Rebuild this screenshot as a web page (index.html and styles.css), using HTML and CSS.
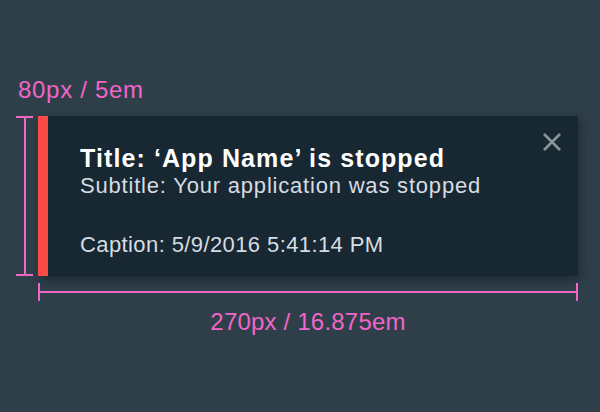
FILE: index.html
```html
<!DOCTYPE html>
<html>
<head>
<meta charset="utf-8">
<link rel="stylesheet" href="styles.css">
</head>
<body>
<div class="page">
  <div class="label label-height">80px / 5em</div>
  <div class="row">
    <div class="vmeasure"><span class="tick"></span><span class="vline"></span><span class="tick"></span></div>
    <div class="toast">
      <div class="toast-body">
        <div class="title">Title: ‘App Name’ is stopped</div>
        <div class="subtitle">Subtitle: Your application was stopped</div>
        <div class="caption">Caption: 5/9/2016 5:41:14 PM</div>
      </div>
      <button class="close" aria-label="Close">
        <svg width="20" height="20" viewBox="0 0 20 20"><path d="M2 2 L18 18 M18 2 L2 18" stroke="#8b949b" stroke-width="2.6" fill="none"/></svg>
      </button>
    </div>
  </div>
  <div class="hmeasure"><span class="htick"></span><span class="hline"></span><span class="htick"></span></div>
  <div class="label label-width">270px / 16.875em</div>
</div>
</body>
</html>
```
FILE: styles.css
```css
html, body {
  margin: 0;
  padding: 0;
  background: #2e3f4a;
  width: 600px;
  height: 412px;
  overflow: hidden;
  font-family: "Liberation Sans", Arial, sans-serif;
}
.page {
  padding: 76px 0 0 16px;
  display: flex;
  flex-direction: column;
}
.label {
  color: #f066c6;
  font-size: 24px;
  line-height: 28px;
}
.label-height {
  margin-left: 2px;
  height: 40px;
  letter-spacing: 0.7px;
}
.row {
  display: flex;
  align-items: stretch;
  gap: 5px;
}
.vmeasure {
  width: 17px;
  height: 160px;
  display: flex;
  flex-direction: column;
  align-items: center;
}
.tick {
  width: 17px;
  height: 2px;
  background: #f066c6;
}
.vline {
  flex: 1;
  width: 2px;
  background: #f066c6;
}
.toast {
  width: 540px;
  height: 160px;
  box-sizing: border-box;
  background: #182833;
  border-left: 10px solid #fb4b42;
  display: flex;
  padding: 16px 16px 16px 32px;
  box-shadow: 2px 4px 10px rgba(0, 0, 0, 0.35);
}
.toast-body {
  flex: 1;
  margin-top: 12px;
  display: flex;
  flex-direction: column;
}
.title {
  color: #ffffff;
  font-weight: bold;
  font-size: 25px;
  line-height: 28px;
  letter-spacing: 1.1px;
}
.subtitle {
  color: #d6dce1;
  font-size: 22px;
  line-height: 28px;
  letter-spacing: 0.8px;
}
.caption {
  color: #d6dce1;
  font-size: 22px;
  line-height: 28px;
  margin-top: 31px;
  letter-spacing: 0.4px;
}
.close {
  width: 20px;
  height: 20px;
  padding: 0;
  border: 0;
  background: none;
  display: block;
}
.close svg { display: block; }
.hmeasure {
  margin: 7px 0 0 22px;
  width: 540px;
  height: 18px;
  display: flex;
  align-items: center;
}
.htick {
  width: 2px;
  height: 18px;
  background: #f066c6;
}
.hline {
  flex: 1;
  height: 2px;
  background: #f066c6;
}
.label-width {
  margin-left: 22px;
  width: 540px;
  text-align: center;
  margin-top: 7px;
  letter-spacing: 0.2px;
}
```
